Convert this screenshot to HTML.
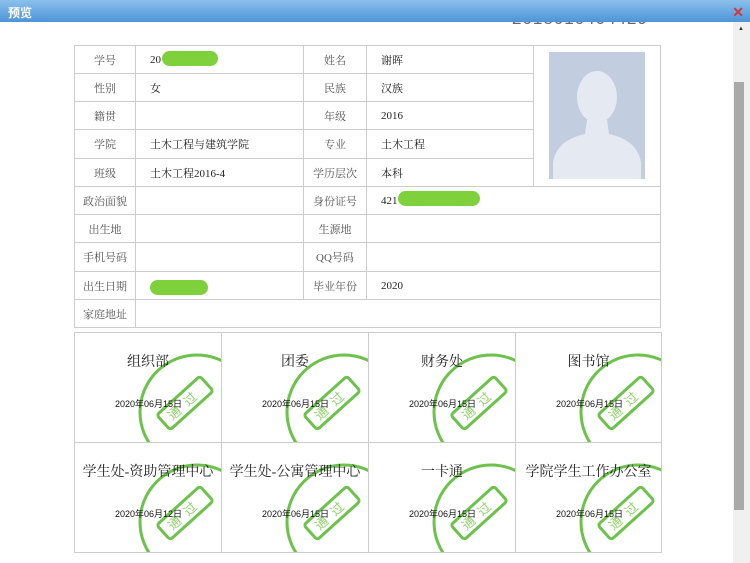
<!DOCTYPE html>
<html><head><meta charset="utf-8"><style>
*{margin:0;padding:0;box-sizing:border-box}
body{width:750px;height:563px;overflow:hidden;background:#fff;font-family:"Liberation Serif","Noto Serif CJK SC",serif;position:relative}
.title{position:absolute;left:0;top:0;width:750px;height:22px;background:linear-gradient(#8cc0ec,#4d94d8);color:#fff;font-size:12px;font-weight:bold;padding:4px 0 0 8px;z-index:5;font-family:"Noto Sans CJK SC",sans-serif}
.x{position:absolute;right:6px;top:2px;color:#d33;font-size:14px}
.num{position:absolute;left:512px;top:10px;font-size:17px;color:#666;letter-spacing:1px;line-height:1;font-family:"Liberation Sans",sans-serif}
.sb{position:absolute;left:733px;top:22px;width:17px;height:541px;background:#f0f0f0}
.thumb{position:absolute;left:734px;top:82px;width:10px;height:428px;background:#a9a9a9}
.c{position:absolute;border:1px solid #ccc;font-size:11px;color:#222;display:flex;align-items:center}
.l{justify-content:center;color:#555}
.v{padding-left:14px}
.stamp{position:absolute;border:1px solid #ccc;overflow:hidden}
.st{position:absolute;width:100%;text-align:center;top:18px;font-size:14px;color:#222}
.dt{position:absolute;left:40px;top:64px;font-size:9px;color:#111;font-family:"Liberation Sans","Noto Sans CJK SC",sans-serif}
.blob{position:absolute;background:#7ed13a;border-radius:9px;height:15px}
</style></head><body>
<div class="title">预览<span class="x">✕</span></div>
<div class="num">2018010404429</div>
<div class="sb"></div><div class="thumb"></div>
<div style="position:absolute;left:738px;top:26px;font-size:6px;color:#333">▲</div>
<div id="t"></div>
<div class="c" style="left:533px;top:45px;width:128px;height:142px"></div>
<svg style="position:absolute;left:549px;top:52px" width="96" height="127"><rect width="96" height="127" fill="#c2cde0"/><ellipse cx="48" cy="45" rx="20" ry="26" fill="#e4e9f2"/><path d="M38 68 L58 68 L60 82 Q88 88 92 110 L92 127 L4 127 L4 110 Q8 88 36 82 Z" fill="#e4e9f2"/></svg>
<script>
var rows=[45,73,101,129,158,186,214,242,271,299,327];
var d=[["学号","20","姓名","谢晖"],["性别","女","民族","汉族"],["籍贯","","年级","2016"],["学院","土木工程与建筑学院","专业","土木工程"],["班级","土木工程2016-4","学历层次","本科"],["政治面貌","","身份证号","421"],["出生地","","生源地",""],["手机号码","","QQ号码",""],["出生日期","","毕业年份","2020"],["家庭地址"]];
var h="";
for(var i=0;i<10;i++){var y=rows[i],hh=rows[i+1]-y+1,r=d[i];
h+='<div class="c l" style="left:74px;top:'+y+'px;width:62px;height:'+hh+'px">'+r[0]+'</div>';
if(i==9){h+='<div class="c v" style="left:135px;top:'+y+'px;width:526px;height:'+hh+'px"></div>';continue}
h+='<div class="c v" style="left:135px;top:'+y+'px;width:169px;height:'+hh+'px">'+r[1]+'</div>';
h+='<div class="c l" style="left:303px;top:'+y+'px;width:64px;height:'+hh+'px">'+r[2]+'</div>';
h+='<div class="c v" style="left:366px;top:'+y+'px;width:'+(i<5?168:295)+'px;height:'+hh+'px">'+r[3]+'</div>';}
h+='<div class="blob" style="left:162px;top:51px;width:56px"></div><div class="blob" style="left:398px;top:191px;width:82px"></div><div class="blob" style="left:150px;top:280px;width:58px"></div>';
var names=["组织部","团委","财务处","图书馆","学生处-资助管理中心","学生处-公寓管理中心","一卡通","学院学生工作办公室"];
var xs=[74,221,368,515,661];
for(var k=0;k<8;k++){var c=k%4,x=xs[c],y=k<4?332:442,w=xs[c+1]-x+1;
h+='<div class="stamp" style="left:'+x+'px;top:'+y+'px;width:'+w+'px;height:111px"><svg style="position:absolute;left:0;top:0" width="'+w+'" height="111"><circle cx="122" cy="79" r="57" fill="none" stroke="#6cc24a" stroke-width="3"/><g transform="translate(110,70) rotate(-42)"><rect x="-29" y="-10" width="58" height="20" rx="3" fill="none" stroke="#6cc24a" stroke-width="3"/><text x="0" y="5" text-anchor="middle" font-size="13" fill="#8fd36a" font-family="Noto Sans CJK SC,sans-serif" letter-spacing="8">通过</text></g></svg><div class="st">'+names[k]+'</div><div class="dt">2020年06月'+(k==4?"12":"15")+'日</div></div>';}
document.getElementById("t").innerHTML=h;
</script>
</body></html>
